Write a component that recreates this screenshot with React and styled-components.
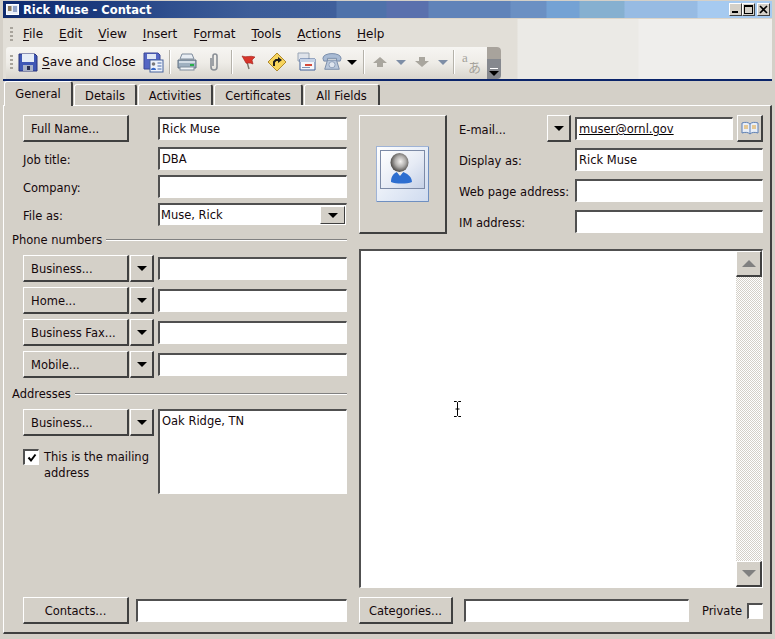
import styled, { createGlobalStyle } from "styled-components";

const GlobalStyle = createGlobalStyle`
  html, body { margin: 0; padding: 0; background: #d4d0c8; }
  * { box-sizing: border-box; }
`;

const uiFont = `"DejaVu Sans", "Open Sans", Tahoma, sans-serif`;

const barBands = `linear-gradient(90deg, #e2dfd8 0, #e2dfd8 517px, #ebeae6 518px, #ebeae6 638px, #efeeec 639px)`;

const Window = styled.div`
  width: 775px;
  height: 639px;
  display: flex;
  flex-direction: column;
  padding: 1px 3px 0 3px;
  background: #d4d0c8;
  font-family: ${uiFont};
  font-size: 11.5px;
  color: #14080c;
  overflow: hidden;
`;

const TitleBar = styled.div`
  height: 17px;
  flex: none;
  display: flex;
  align-items: center;
  padding: 0 2px 0 3px;
  background: linear-gradient(90deg, #0d2a6e 0, #1d3b7e 100px, #2f4f8e 170px, #3d5d99 250px, #3f5f9b 336px, #4f72aa 337px, #4f72aa 386px, #5a70ad 387px, #5a70ad 428px, #6083b9 429px, #6083b9 510px, #6b90c3 511px, #6b90c3 546px, #74a2d4 547px, #74a2d4 579px, #86b0d0 580px, #86b0d0 624px, #97bbe3 625px, #97bbe3 697px, #a6caf0 698px) -3px 0 / 775px 100%;
`;

const TitleText = styled.span`
  margin-left: 4px;
  color: #fff;
  font-weight: 700;
  font-size: 11.5px;
  white-space: nowrap;
`;

const WindowButtons = styled.div`
  margin-left: auto;
  display: flex;
`;

const WindowButton = styled.div`
  width: 13px;
  height: 13px;
  margin-left: ${(p) => p.$gap || 0}px;
  background: #d4d0c8;
  border: 1px solid;
  border-color: #fff #404040 #404040 #fff;
  display: flex;
  align-items: center;
  justify-content: center;
`;

const MenuBar = styled.div`
  height: 29px;
  flex: none;
  display: flex;
  align-items: center;
  padding: 1px 0 0 7px;
  border-top: 1px solid #dcd4c8;
  background: ${barBands} -3px 0 / 775px 100%;
`;

const Grip = styled.div`
  width: 3px;
  height: ${(p) => p.$h}px;
  margin-right: ${(p) => p.$mr}px;
  flex: none;
  background: repeating-linear-gradient(180deg, #a8a49c 0, #a8a49c 2px, transparent 2px, transparent 4px);
`;

const MenuItem = styled.span`
  padding: 0 8px;
  font-size: 12px;
  white-space: nowrap;
  u { text-underline-offset: 2px; }
`;

const ToolArea = styled.div`
  height: 34px;
  flex: none;
  display: flex;
  background: ${barBands} -3px 0 / 775px 100%;
  border-bottom: 2px solid #0a246a;
`;

const Toolbar = styled.div`
  width: 495px;
  height: 32px;
  margin-left: 3px;
  display: flex;
  align-items: center;
  padding: 0 0 2px 4px;
  border-radius: 3px 4px 0 0;
  background: linear-gradient(180deg, #f6f5f2 0, #eeece7 50%, #d8d5cd 100%);
  position: relative;
`;

const ToolHandle = styled.div`
  position: absolute;
  right: 0;
  top: 0;
  width: 14px;
  height: 32px;
  border-radius: 0 4px 4px 0;
  background: linear-gradient(180deg, #a8a39c 0, #a8a39c 38%, #85888e 39%, #85888e 100%);
  display: flex;
  flex-direction: column;
  align-items: center;
  justify-content: flex-end;
  padding-bottom: 3px;
  &::before {
    content: "";
    width: 8px;
    height: 1px;
    margin-bottom: 2px;
    background: #fff;
  }
`;

const Sep = styled.div`
  width: 1px;
  height: 24px;
  flex: none;
  margin: 0 ${(p) => p.$m || 4}px;
  background: #b5b2aa;
  box-shadow: 1px 0 0 #fff;
`;

const ToolIcon = styled.svg`
  flex: none;
  margin: ${(p) => p.$m || "0 2px"};
  display: block;
`;

const ToolLabel = styled.span`
  font-size: 12.2px;
  margin-left: 4px;
  width: 93px;
  flex: none;
  white-space: nowrap;
  u { text-underline-offset: 2px; }
`;

const MiniDrop = styled.div`
  width: 0;
  height: 0;
  flex: none;
  margin: ${(p) => p.$m || "0 4px"};
  border-left: 5px solid transparent;
  border-right: 5px solid transparent;
  border-top: 5px solid ${(p) => p.$c || "#000"};
`;

const Translate = styled.span`
  position: relative;
  width: 22px;
  height: 24px;
  flex: none;
  color: #a5a39c;
  font-family: "Liberation Serif", "Noto Sans CJK JP", serif;
  margin-left: 4px;
  b {
    font-weight: 400;
    font-size: 13px;
    position: absolute;
    left: 2px;
    top: 0;
  }
  i {
    font-style: normal;
    font-size: 13px;
    position: absolute;
    left: 8px;
    top: 7px;
    font-family: "Noto Sans CJK JP", sans-serif;
  }
`;

const TabStrip = styled.div`
  height: 24px;
  flex: none;
  display: flex;
  align-items: flex-end;
  padding-left: 1px;
  position: relative;
  z-index: 1;
`;

const Tab = styled.div`
  height: ${(p) => (p.$active ? 25 : 21)}px;
  width: ${(p) => p.$w}px;
  margin-right: 1px;
  margin-bottom: ${(p) => (p.$active ? -1 : 0)}px;
  display: flex;
  align-items: center;
  justify-content: center;
  background: #d4d0c8;
  border: 1px solid;
  border-width: 1px 2px 0 1px;
  border-color: #fff #404040 transparent #fff;
  border-radius: 3px 3px 0 0;
  padding-top: ${(p) => (p.$active ? 0 : 2)}px;
  white-space: nowrap;
`;

const Panel = styled.div`
  height: 529px;
  flex: none;
  display: grid;
  grid-template-columns: 335px 404px;
  column-gap: 12px;
  padding: 9px 0 8px 8px;
  border: 1px solid;
  border-width: 1px 2px 2px 1px;
  border-color: #fff #404040 #404040 #fff;
`;

const Column = styled.div`
  display: flex;
  flex-direction: column;
  min-height: 0;
`;

const Row = styled.div`
  display: flex;
  align-items: center;
  height: ${(p) => p.$h || 23}px;
  margin-top: ${(p) => p.$mt || 0}px;
  padding-left: ${(p) => (p.$flush ? 0 : 11)}px;
  flex: none;
`;

const FieldLabel = styled.label`
  width: ${(p) => p.$w}px;
  flex: none;
  padding-top: 2px;
  white-space: nowrap;
`;

const Button = styled.div`
  width: ${(p) => p.$w}px;
  height: 27px;
  flex: none;
  display: flex;
  align-items: center;
  justify-content: ${(p) => (p.$center ? "center" : "flex-start")};
  padding: 2px 0 0 ${(p) => (p.$center ? 0 : 7)}px;
  margin-right: ${(p) => p.$mr || 0}px;
  background: #d4d0c8;
  border: 1px solid;
  border-width: 1px 2px 2px 1px;
  border-color: #fff #404040 #404040 #fff;
  white-space: nowrap;
`;

const ArrowButton = styled(Button).attrs({ $center: true })`
  width: 24px;
  margin-left: ${(p) => p.$ml ?? 1}px;
  padding: 0;
  &::after {
    content: "";
    border-left: 5px solid transparent;
    border-right: 5px solid transparent;
    border-top: 5px solid #000;
    margin-top: 1px;
  }
`;

const BookButton = styled(Button).attrs({ $center: true })`
  margin-left: 4px;
  padding: 0;
`;

const TextInput = styled.input`
  width: ${(p) => p.$w}px;
  height: 23px;
  flex: none;
  padding: 0 2px;
  margin: 0;
  outline: none;
  background: #fff;
  font: inherit;
  color: inherit;
  border: 1px solid;
  border-width: 2px 1px 1px 2px;
  border-color: #505050 #fff #fff #505050;
  border-radius: 0;
  text-decoration: ${(p) => (p.$link ? "underline" : "none")};
  text-decoration-color: #000;
`;

const ComboBox = styled.div`
  width: 189px;
  height: 23px;
  flex: none;
  display: flex;
  align-items: center;
  justify-content: space-between;
  background: #fff;
  border: 1px solid;
  border-width: 2px 1px 1px 2px;
  border-color: #505050 #d4d0c8 #d4d0c8 #505050;
  padding-left: 1px;
`;

const ComboArrow = styled.div`
  width: 25px;
  height: 18px;
  margin-right: 1px;
  background: #d4d0c8;
  border: 1px solid;
  border-color: #fff #404040 #404040 #fff;
  display: flex;
  align-items: center;
  justify-content: center;
  &::after {
    content: "";
    border-left: 5px solid transparent;
    border-right: 5px solid transparent;
    border-top: 5px solid #000;
  }
`;

const GroupHeading = styled.div`
  display: flex;
  align-items: center;
  height: 16px;
  margin-top: ${(p) => p.$mt}px;
  padding-top: 2px;
  white-space: nowrap;
  &::after {
    content: "";
    flex: 1;
    margin: -1px 0 0 4px;
    height: 2px;
    background: linear-gradient(180deg, #808080 50%, #fff 50%);
  }
`;

const AddressBlock = styled.div`
  display: flex;
  margin-top: 8px;
  padding-left: 11px;
  flex: none;
`;

const AddressLeft = styled.div`
  width: 135px;
  flex: none;
`;

const AddressButtons = styled.div`
  display: flex;
`;

const MailingCheck = styled.div`
  display: flex;
  margin-top: 13px;
  line-height: 16px;
`;

const CheckBox = styled.div`
  width: 16px;
  height: 16px;
  flex: none;
  margin-right: ${(p) => p.$mr || 0}px;
  background: #fff;
  border: 1px solid;
  border-width: 2px 1px 1px 2px;
  border-color: #505050 #fff #fff #505050;
  display: flex;
  align-items: center;
  justify-content: center;
`;

const AddressBox = styled.div`
  width: 189px;
  height: 85px;
  flex: none;
  background: #fff;
  padding: 3px 2px;
  border: 1px solid;
  border-width: 2px 1px 1px 2px;
  border-color: #505050 #fff #fff #505050;
`;

const BottomRow = styled(Row)`
  margin-top: auto;
  height: 27px;
`;

const ContactHead = styled.div`
  display: flex;
  height: 119px;
  flex: none;
`;

const PhotoButton = styled(Button)`
  height: 119px;
  justify-content: center;
  padding: 0;
  margin-right: 12px;
`;

const ContactFields = styled.div`
  flex: 1;
  display: flex;
  flex-direction: column;
`;

const Notes = styled.div`
  height: 339px;
  margin-top: 15px;
  flex: none;
  display: flex;
  justify-content: flex-end;
  position: relative;
  background: #fff;
  border: 1px solid;
  border-width: 2px 1px 1px 2px;
  border-color: #505050 #fff #fff #505050;
`;

const ScrollBar = styled.div`
  width: 26px;
  flex: none;
  display: flex;
  flex-direction: column;
  justify-content: space-between;
  background-color: #fff;
  background-image: repeating-conic-gradient(#d4d0c8 0 25%, #fff 0 50%);
  background-size: 2px 2px;
`;

const ScrollButton = styled.div`
  height: 26px;
  background: #d4d0c8;
  border: 1px solid;
  border-width: 1px 2px 2px 1px;
  border-color: #fff #404040 #404040 #fff;
  display: flex;
  align-items: center;
  justify-content: center;
  &::after {
    content: "";
    border-left: 7px solid transparent;
    border-right: 7px solid transparent;
    ${(p) => (p.$up ? "border-bottom: 7px solid #808080;" : "border-top: 7px solid #808080;")}
  }
`;

const TextCursor = styled.svg`
  position: absolute;
  left: 92px;
  top: 150px;
`;

const PrivateLabel = styled.span`
  margin-left: auto;
  margin-right: 5px;
  padding-top: 1px;
`;

const FloppyIcon = () => (
  <ToolIcon width="20" height="20" viewBox="0 0 20 20" $m="0">
    <path d="M1 2h16l2 2v15H1z" fill="#3f57b5" stroke="#26337a" />
    <rect x="4" y="2" width="12" height="8" fill="#e6edf7" />
    <rect x="5" y="13" width="10" height="6" fill="#a9b2c8" />
    <rect x="9" y="14" width="3" height="4" fill="#2a2f50" />
  </ToolIcon>
);

const SaveCardIcon = () => (
  <ToolIcon width="21" height="21" viewBox="0 0 21 21" $m="0 3px 0 8px">
    <path d="M1 1h14l2 2v14H1z" fill="#5566c4" stroke="#3a4696" />
    <rect x="4" y="2" width="9" height="5" fill="#dfe6f4" />
    <rect x="7" y="8" width="13" height="12" fill="#eef3fb" stroke="#47639c" />
    <circle cx="10.5" cy="12" r="1.8" fill="#7a7a7a" />
    <path d="M8 18c0-3 5-3 5 0z" fill="#3668c8" />
    <path d="M14.5 11h4M14.5 14h4M14.5 17h4" stroke="#4a6aa8" />
  </ToolIcon>
);

const PrinterIcon = () => (
  <ToolIcon width="20" height="20" viewBox="0 0 20 20" $m="0 0 0 5px">
    <path d="M5 2h10l2 5H3z" fill="#e8edf3" stroke="#7f8c9c" />
    <path d="M1 8h18v8H1z" fill="#9fb0c0" stroke="#5f6f80" />
    <path d="M2 9h16v2H2z" fill="#d4dde6" />
    <rect x="3" y="15" width="14" height="3" fill="#f1f4f7" stroke="#7f8c9c" />
    <rect x="13" y="12" width="4" height="2" fill="#27b04a" />
  </ToolIcon>
);

const ClipIcon = () => (
  <ToolIcon width="12" height="20" viewBox="0 0 12 20" $m="0 7px 0 11px">
    <path d="M3 6v9a3 3 0 006 0V4a2 2 0 00-4 0v10" fill="none" stroke="#8a8f96" strokeWidth="1.6" />
  </ToolIcon>
);

const FlagIcon = () => (
  <ToolIcon width="16" height="16" viewBox="0 0 16 16" $m="0 4px 0 5px">
    <path d="M6 8l2 7" stroke="#7a7468" strokeWidth="1.4" />
    <path d="M1 2c4 2 8-1 13 1l-3 3 1 4C8 8 6 10 5 9z" fill="#d8342a" stroke="#9e1f18" strokeWidth=".6" />
  </ToolIcon>
);

const GoIcon = () => (
  <ToolIcon width="20" height="20" viewBox="0 0 20 20" $m="0 4px 0 6px">
    <path d="M10 1l9 9-9 9-9-9z" fill="#f7d45c" stroke="#b08a2e" />
    <path d="M7 14v-4l2-2h3" fill="none" stroke="#1c1c1c" strokeWidth="2" />
    <path d="M11 5l4 3-4 3z" fill="#1c1c1c" />
  </ToolIcon>
);

const MailIcon = () => (
  <ToolIcon width="20" height="20" viewBox="0 0 20 20" $m="0 3px 0 5px">
    <path d="M2 1h11v8H2z" fill="#dfe3ea" stroke="#9aa6b6" />
    <path d="M4 7h15v11H4z" fill="#f4f6fa" stroke="#3f5f98" />
    <path d="M4 7h15v3H4z" fill="#c5d2e6" />
    <rect x="9" y="12" width="7" height="2" fill="#d64a3a" />
    <rect x="6" y="15" width="8" height="1" fill="#7f93b5" />
  </ToolIcon>
);

const PhoneIcon = () => (
  <ToolIcon width="20" height="20" viewBox="0 0 22 20" $m="0 5px 0 3px">
    <path d="M1 6c0-7 20-7 20 0l-1 3h-4V6H6v3H2z" fill="#a9bbd4" stroke="#7488a6" />
    <path d="M6 8h10l3 10H3z" fill="#b9c7da" stroke="#7488a6" />
    <circle cx="11" cy="13" r="3.4" fill="#dfe6ef" stroke="#8a9cb6" />
  </ToolIcon>
);

const NavArrow = ({ down }) => (
  <ToolIcon width="16" height="12" viewBox="0 0 16 12" $m={down ? "0 4px" : "0 3px 0 5px"}>
    {down ? (
      <path d="M5 1h6v4h4l-7 6-7-6h4z" fill="#a9a69e" />
    ) : (
      <path d="M8 1l7 6h-4v4H5V7H1z" fill="#a9a69e" />
    )}
  </ToolIcon>
);

const PersonCard = () => (
  <svg width="53" height="56" viewBox="0 0 53 56">
    <defs>
      <linearGradient id="cardBg" x1="0" y1="0" x2="1" y2="1">
        <stop offset="0" stopColor="#ffffff" />
        <stop offset="0.55" stopColor="#e6ebf5" />
        <stop offset="1" stopColor="#c4d0e6" />
      </linearGradient>
      <linearGradient id="cardFoot" x1="0" y1="0" x2="1" y2="1">
        <stop offset="0" stopColor="#ffffff" />
        <stop offset="1" stopColor="#cfdbef" />
      </linearGradient>
      <radialGradient id="head" cx="0.55" cy="0.45" r="0.58">
        <stop offset="0" stopColor="#f4f2f0" />
        <stop offset="0.5" stopColor="#b0aeac" />
        <stop offset="1" stopColor="#45423f" />
      </radialGradient>
    </defs>
    <rect x="0.5" y="0.5" width="52" height="55" fill="url(#cardFoot)" stroke="#9fb3d6" />
    <path d="M52.5 1v54.5H1" fill="none" stroke="#6f8fc0" />
    <rect x="4.5" y="4.5" width="44" height="38" fill="url(#cardBg)" stroke="#7c8aa6" />
    <path d="M15 36c0-6 3-9 6-10l3 3 3-3c3 1 9 4 9 10-5 2-16 2-21 0z" fill="#2d6ed0" />
    <path d="M20 25l4 5 4-5-2-2h-4z" fill="#ecebe8" />
    <ellipse cx="23.5" cy="16.5" rx="9" ry="9.5" fill="url(#head)" />
  </svg>
);

const BookIcon = () => (
  <svg width="18" height="14" viewBox="0 0 18 14">
    <path d="M1 2c3-1 6-1 8 1 2-2 5-2 8-1v10c-3-1-6-1-8 1-2-2-5-2-8-1z" fill="#e9eff8" stroke="#5c7fb4" />
    <path d="M9 3v10" stroke="#5c7fb4" />
    <path d="M3 5h4M3 7h4M11 5h4M11 7h4" stroke="#e0a030" />
  </svg>
);

const TITLE_TABS = [
  { label: "General", w: 69, active: true },
  { label: "Details", w: 63 },
  { label: "Activities", w: 75 },
  { label: "Certificates", w: 89 },
  { label: "All Fields", w: 76 },
];

const MENUS = [
  [null, "F", "ile"],
  [null, "E", "dit"],
  [null, "V", "iew"],
  [null, "I", "nsert"],
  ["F", "o", "rmat"],
  [null, "T", "ools"],
  [null, "A", "ctions"],
  [null, "H", "elp"],
];

const PHONES = ["Business...", "Home...", "Business Fax...", "Mobile..."];

const App = () => (
  <>
    <GlobalStyle />
    <Window>
      <TitleBar>
        <svg width="13" height="11" viewBox="0 0 13 11">
          <rect x="0.5" y="0.5" width="12" height="10" fill="#e8eef8" stroke="#fff" />
          <rect x="2" y="2" width="3.5" height="5" fill="#8a7a60" />
          <path d="M7 3h4M7 5h4M7 7h4" stroke="#3a5a9c" />
        </svg>
        <TitleText>Rick Muse - Contact</TitleText>
        <WindowButtons>
          <WindowButton>
            <svg width="9" height="9" viewBox="0 0 9 9">
              <rect x="1" y="6" width="6" height="2" fill="#000" />
            </svg>
          </WindowButton>
          <WindowButton>
            <svg width="9" height="9" viewBox="0 0 9 9">
              <path d="M0 0h9v9H0z M1 2v6h7V2z" fill="#000" fillRule="evenodd" />
            </svg>
          </WindowButton>
          <WindowButton $gap={2}>
            <svg width="9" height="9" viewBox="0 0 9 9">
              <path d="M1 1l7 7M8 1L1 8" stroke="#000" strokeWidth="1.6" />
            </svg>
          </WindowButton>
        </WindowButtons>
      </TitleBar>

      <MenuBar>
        <Grip $h={14} $mr={2} />
        {MENUS.map(([lead, key, rest], i) => (
          <MenuItem key={i}>
            {lead}
            <u>{key}</u>
            {rest}
          </MenuItem>
        ))}
      </MenuBar>

      <ToolArea>
        <Toolbar>
          <Grip $h={14} $mr={5} />
          <FloppyIcon />
          <ToolLabel>
            <u>S</u>ave and Close
          </ToolLabel>
          <SaveCardIcon />
          <Sep $m={2} />
          <PrinterIcon />
          <ClipIcon />
          <Sep $m={4} />
          <FlagIcon />
          <GoIcon />
          <MailIcon />
          <PhoneIcon />
          <MiniDrop $m="0 3px 0 0" />
          <Sep $m={3} />
          <NavArrow />
          <MiniDrop $c="#7e8ea6" $m="0 4px 0 5px" />
          <NavArrow down />
          <MiniDrop $c="#7e8ea6" $m="0 3px 0 4px" />
          <Sep $m={2} />
          <Translate>
            <b>a</b>
            <i>あ</i>
          </Translate>
          <ToolHandle>
            <MiniDrop $m="0" />
          </ToolHandle>
        </Toolbar>
      </ToolArea>

      <TabStrip>
        {TITLE_TABS.map((t) => (
          <Tab key={t.label} $w={t.w} $active={t.active}>
            {t.label}
          </Tab>
        ))}
      </TabStrip>

      <Panel>
        <Column>
          <Row $h={27}>
            <Button $w={106} $mr={29}>Full Name...</Button>
            <TextInput $w={189} defaultValue="Rick Muse" />
          </Row>
          <Row $mt={5}>
            <FieldLabel $w={135}>Job title:</FieldLabel>
            <TextInput $w={189} defaultValue="DBA" />
          </Row>
          <Row $mt={5}>
            <FieldLabel $w={135}>Company:</FieldLabel>
            <TextInput $w={189} />
          </Row>
          <Row $mt={5}>
            <FieldLabel $w={135}>File as:</FieldLabel>
            <ComboBox>
              Muse, Rick
              <ComboArrow />
            </ComboBox>
          </Row>

          <GroupHeading $mt={5}>Phone numbers</GroupHeading>
          {PHONES.map((p, i) => (
            <Row key={p} $h={27} $mt={i === 0 ? 8 : 5}>
              <Button $w={106}>{p}</Button>
              <ArrowButton $w={24} $mr={4} />
              <TextInput $w={189} />
            </Row>
          ))}

          <GroupHeading $mt={7}>Addresses</GroupHeading>
          <AddressBlock>
            <AddressLeft>
              <AddressButtons>
                <Button $w={106}>Business...</Button>
                <ArrowButton $w={24} />
              </AddressButtons>
              <MailingCheck>
                <CheckBox $mr={5}>
                  <svg width="10" height="10" viewBox="0 0 10 10">
                    <path d="M1.5 4.5l2.5 3 4.5-6" fill="none" stroke="#000" strokeWidth="2" />
                  </svg>
                </CheckBox>
                <span>
                  This is the mailing
                  <br />
                  address
                </span>
              </MailingCheck>
            </AddressLeft>
            <AddressBox>Oak Ridge, TN</AddressBox>
          </AddressBlock>

          <BottomRow>
            <Button $w={106} $mr={7} $center>Contacts...</Button>
            <TextInput $w={211} />
          </BottomRow>
        </Column>

        <Column>
          <ContactHead>
            <PhotoButton $w={88}>
              <PersonCard />
            </PhotoButton>
            <ContactFields>
              <Row $h={27} $flush>
                <FieldLabel $w={88}>E-mail...</FieldLabel>
                <ArrowButton $w={24} $ml={0} $mr={4} />
                <TextInput $w={158} $link defaultValue="muser@ornl.gov" />
                <BookButton $w={26}>
                  <BookIcon />
                </BookButton>
              </Row>
              <Row $mt={6} $flush>
                <FieldLabel $w={116}>Display as:</FieldLabel>
                <TextInput $w={188} defaultValue="Rick Muse" />
              </Row>
              <Row $mt={8} $flush>
                <FieldLabel $w={116}>Web page address:</FieldLabel>
                <TextInput $w={188} />
              </Row>
              <Row $mt={8} $flush>
                <FieldLabel $w={116}>IM address:</FieldLabel>
                <TextInput $w={188} />
              </Row>
            </ContactFields>
          </ContactHead>

          <Notes>
            <TextCursor width="9" height="16" viewBox="0 0 9 16">
              <path d="M1 .5h2.5L4.5 1.5 5.5.5H8M4.5 1.5v13M1 15.5h2.5l1-1 1 1H8M2.5 8h4" fill="none" stroke="#000" />
            </TextCursor>
            <ScrollBar>
              <ScrollButton $up />
              <ScrollButton />
            </ScrollBar>
          </Notes>

          <BottomRow $flush>
            <Button $w={94} $mr={11} $center>Categories...</Button>
            <TextInput $w={225} />
            <PrivateLabel>Private</PrivateLabel>
            <CheckBox />
          </BottomRow>
        </Column>
      </Panel>
    </Window>
  </>
);

export default App;
